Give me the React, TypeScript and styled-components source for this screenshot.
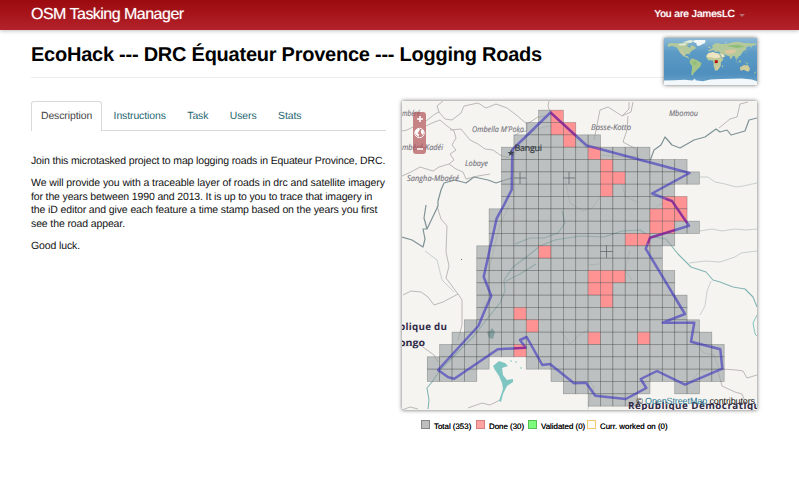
import React from "react";
import styled, { createGlobalStyle } from "styled-components";

const Global = createGlobalStyle`
  * { box-sizing: border-box; }
  html, body { margin: 0; padding: 0; background: #fff; }
  body {
    font-family: "Liberation Sans", Arial, sans-serif;
    font-size: 10.5px;
    line-height: 14px;
    color: #111;
    overflow: hidden;
    text-rendering: geometricPrecision;
  }
`;

const Navbar = styled.header`
  height: 30px;
  padding: 0 54px 0 31px;
  display: flex;
  align-items: center;
  justify-content: space-between;
  background: linear-gradient(#9b0a0d, #b4222b);
  box-shadow: 0 1px 4px rgba(0, 0, 0, 0.25);
  color: #fff;
  white-space: nowrap;
`;

const Brand = styled.span`
  font-size: 16px;
  line-height: 29px;
  height: 30px;
  letter-spacing: -0.52px;
  text-shadow: 0 0 1px rgba(255, 255, 255, 0.5);
`;

const UserMenu = styled.span`
  display: flex;
  align-items: center;
  gap: 4px;
  height: 30px;
  font-size: 10.3px;
  letter-spacing: -0.05px;
  text-shadow: 0 0 1px #fff;
  align-self: flex-start;
`;

const Caret = styled.i`
  border: 3px solid transparent;
  border-top-color: #b96b70;
  border-bottom: 0;
`;

const Page = styled.main`
  width: 726px;
  margin-left: 31px;
`;

const TitleBar = styled.div`
  height: 48px;
  display: flex;
  justify-content: space-between;
  border-bottom: 1px solid #eceeee;
`;

const Title = styled.h1`
  margin: 0;
  padding-top: 13px;
  font-size: 20px;
  line-height: 24px;
  letter-spacing: -0.245px;
  color: #000;
  white-space: nowrap;
`;

const Overview = styled.div`
  width: 93px;
  height: 47px;
  margin-top: 8px;
  box-shadow: 0 0 4px rgba(0, 0, 0, 0.6);
  svg { display: block; }
`;

const Columns = styled.div`
  display: grid;
  grid-template-columns: 355px 355px;
  column-gap: 16px;
  padding-top: 23px;
`;

const Tabs = styled.nav`
  display: flex;
  height: 30px;
  border-bottom: 1px solid #d9d9d9;
  font-size: 10.4px;
  letter-spacing: -0.08px;
`;

const Tab = styled.a<{ $active?: boolean }>`
  height: ${(p) => (p.$active ? "30px" : "29px")};
  padding: 0 ${(p) => (p.$active ? "9px" : "10px")};
  margin-right: 1.5px;
  line-height: ${(p) => (p.$active ? "29px" : "31px")};
  color: ${(p) => (p.$active ? "#444" : "#246570")};
  background: #fff;
  border: ${(p) => (p.$active ? "1px solid #d9d9d9" : "0")};
  border-bottom: 0;
  border-radius: 3px 3px 0 0;
`;

const Prose = styled.div`
  padding-top: 24px;
  white-space: nowrap;
`;

const Paragraph = styled.p`
  margin: 0 0 8px;
  line-height: 13.8px;
`;

const Line = styled.span<{ $spacing?: number }>`
  display: block;
  letter-spacing: ${(p) => p.$spacing ?? -0.12}px;
`;

const MapFrame = styled.div`
  position: relative;
  height: 309px;
  background: #f5f4f0;
  box-shadow: 0 0 4px rgba(0, 0, 0, 0.6);
  svg { display: block; }
`;

const ZoomControl = styled.div`
  position: absolute;
  left: 11px;
  top: 11px;
  width: 13px;
  height: 42px;
  border-radius: 3px;
  background: rgba(177, 82, 88, 0.7);
`;

const Attribution = styled.div`
  position: absolute;
  right: 2px;
  bottom: 2px;
  font-size: 9px;
  line-height: 14px;
  letter-spacing: -0.12px;
  color: #111;
  white-space: nowrap;
  a { color: #2b7a94; }
`;

const Legend = styled.div`
  display: flex;
  padding: 10px 0 0 19px;
  font-size: 7.9px;
  line-height: 12px;
  white-space: nowrap;
`;

const LegendItem = styled.span<{ $width: number }>`
  display: flex;
  gap: 4px;
  width: ${(p) => p.$width}px;
  text-shadow: 0 0 0.5px #111;
`;

const Swatch = styled.i<{ $fill: string; $edge: string }>`
  width: 9px;
  height: 9px;
  flex: none;
  border: 1px solid ${(p) => p.$edge};
  background: ${(p) => p.$fill};
`;

const LegendText = styled.span`
  padding-top: 1px;
`;

const STEP_X = 12.37;
const STEP_Y = 12.33;
const ORIGIN_X = 427.3;
const ORIGIN_Y = 110.2;

// Per grid row: [first column, column after the last] spans, and finished columns.
const rows: { spans: [number, number][]; done?: number[] }[] = [
  { spans: [[9, 11]], done: [10] },
  { spans: [[8, 12]], done: [10, 11] },
  { spans: [[7, 14]], done: [11] },
  { spans: [[6, 18]], done: [13] },
  { spans: [[6, 21]], done: [14] },
  { spans: [[6, 22]], done: [14, 15] },
  { spans: [[6, 20]], done: [14] },
  { spans: [[6, 21]], done: [19, 20] },
  { spans: [[5, 21]], done: [18, 19, 20] },
  { spans: [[5, 22]], done: [18, 19] },
  { spans: [[5, 20]], done: [16, 17] },
  { spans: [[4, 19]], done: [9] },
  { spans: [[4, 19]] },
  { spans: [[4, 20]], done: [13, 14, 15] },
  { spans: [[4, 20]], done: [13, 14] },
  { spans: [[4, 21]], done: [14] },
  { spans: [[4, 21]], done: [7] },
  { spans: [[3, 22]], done: [8] },
  { spans: [[2, 23]], done: [13, 17] },
  { spans: [[1, 24]], done: [7] },
  { spans: [[0, 5], [8, 24]] },
  { spans: [[0, 4], [10, 24]] },
  { spans: [[11, 18], [20, 22]] },
  { spans: [[13, 17]] },
];

const cells = rows.flatMap((row, y) =>
  row.spans.flatMap(([from, to]) =>
    Array.from({ length: to - from }, (_, k) => ({
      x: from + k,
      y,
      done: row.done?.includes(from + k) ?? false,
    }))
  )
);

const boundary =
  "550.5,112.5 586.7,145.5 689.5,173 652,193.5 672,201 689,225.7 650,237.7 645.7,248.7 685,314 662.7,322.7 694.3,322.7 691,341.7 720.3,349.3 722.3,368.7 685,384.7 657,371 640.7,379 646.3,388 625.7,399 595.3,395.7 586,382.7 574,383.3 550,364 542.3,365 526.7,337 520,340 525.7,347.7 497.7,349.3 454.3,378.7 448.3,377.3 438,370 478.3,326 485,310 491.3,296 483.7,276.7 496.7,218.3 504,205 511.7,189.7 512.3,149.7";

const regionBorders = [
  "M402 131 L407 130 L413 127 M426 121 L435 114 L439 112 L437 106 L443 101",
  "M426 126 L432 123 L440 120 L447 126 L454 131 L456 138 L452 145 L456 150 L450 154 L454 160 L449 164 L439 167 L433 171 L420 167 L411 172 L402 176",
  "M439 112 L445 119 L452 120 L461 113 L464 106 L478 103 L486 108 L496 104 L507 108 L515 114 L521 119 L527 124 L527 131 L520 132 L514 136",
  "M450 130 L461 129 L470 140 L478 144 L485 149 L493 150 L500 155 L509 158",
  "M449 164 L456 169 L463 172 L466 179 M466 179 L478 176 L490 174",
  "M527 124 L538 117 L546 116 M549 101 L548 106 L550 112",
  "M594 140 L597 125 L600 110 L608 107 L616 112 L622 116 L629 109 L629 102 M622 116 L631 112 L633 102 M628 116 L627 130 L623 142 L636 149 L638 160 L648 162",
  "M719 128 L730 119 L737 117 L740 104 L748 102",
  "M403 295 L411 291 L421 292 L428 297 L434 305 L443 302 L458 294 L446 278 L449 266 L446 252 L447 226 L441 219 L437 206",
  "M458 294 L462 300 L462 325 L458 340 M402 346 L420 345 L434 355 L438 362",
  "M722 369 L736 370 L743 371 L747 378 L757 375 M718 371 L722 386 L735 392 L742 394 L744 399",
  "M468 408 L482 403 L490 405 L500 400 M402 410 L410 407 L418 409",
];

const rivers = [
  "M402 237 L412 240 L423 247 L425 239 L423 229 L427 229 L424 218 L426 205 M427 229 L438 206 L438 201 L441 190 L444 183 L455 180 L466 183 L474 177 L488 180 L496 183 L505 180 L512 178",
  "M650 161 L654 150 L661 145 L665 137 L672 145 L680 148 L694 140 L705 137 L716 129 L720 132 L727 130 L731 135 L745 131 L749 120 L757 118",
];

const streams = [
  "M428 409 L429 400 L427 388 L432 382 L440 370 L454 356 L474 336 L487 319 L500 303 L505 291 L504 280 L513 267 L529 255 L540 246 L555 240 L580 236 L604 237 L622 231 L640 230 L649 236 L666 239 L678 254 L691 267 L706 272 L713 280 L720 282 L733 287 L745 289 L753 297 L757 307",
  "M506 281 L520 274 L536 264 M515 244 L530 238 L544 238 L558 233 L565 223 L562 211",
];

const creeks = [
  "M700 177 L708 177 L715 182 L725 184 L736 187 L743 186 L757 183",
  "M689 263 L705 261 L720 262 L735 257 L741 253 L757 251 M711 281 L707 291 L705 306 L700 315",
  "M700 231 L712 229 L722 231 L735 229 L746 230 L757 229",
  "M512 159 L517 150 L528 135 L537 129 L549 126 L561 128 L573 134 L585 147 L601 155 L620 157 L640 156",
  "M425 251 L437 260 L442 280 L454 292 M509 205 L500 225 L495 245 L490 265 L488 280 L490 297 L482 309",
  "M565 180 L570 203 L583 211 L592 208 L600 197 M620 175 L625 196 L639 203 M630 250 L625 270 L632 280",
  "M560 330 L570 344 L578 336 L588 330 M589 380 L594 388 L590 396 L588 409 M690 337 L704 353 L714 355 L719 369 L700 371 L690 382",
  "M650 215 L658 205 L666 203 M669 287 L674 297 L682 311 M588 265 L600 264",
];

const labels: [string, number, number, number][] = [
  ["mbéré", 402, 115.5, 18],
  ["mbéré-Kadéi", 402, 149.5, 41],
  ["Ombella M'Poko", 472, 132, 52],
  ["Lobaye", 465, 166, 23],
  ["Sangha-Mbaéré", 407, 181, 52],
  ["Basse-Kotto", 591, 130, 40],
  ["Mbomou", 669, 116, 29],
];

function ProjectMap() {
  return (
    <svg width="355" height="309" viewBox="402 101 355 309" fontFamily="'Open Sans', 'Noto Sans', sans-serif">
      <g fill="none" strokeLinejoin="round">
        {regionBorders.map((d) => <path key={d} d={d} stroke="#bcb8b9" strokeWidth="1" />)}
        {creeks.map((d) => <path key={d} d={d} stroke="#b5c0be" strokeWidth="0.7" />)}
        {rivers.map((d) => <path key={d} d={d} stroke="#7f9296" strokeWidth="1.2" />)}
        {streams.map((d) => <path key={d} d={d} stroke="#83b5b4" strokeWidth="1.1" />)}
        <path d="M757 315 L753 323 L755 334 L758 337" stroke="#83c5bd" />
      </g>
      <g fill="#7fc6c2">
        <path d="M493 366 L499 361 L505 363 L508 366 L502 368 L503 375 L507 380 L513 379 L513 382 L507 386 L503 394 L501 402 L499 401 L503 389 L502 383 L499 376 L495 370 Z" />
        <path d="M487 332 L490 331 L492 328 L495 332 L493 339 L489 338 Z" fill="#5d9c9b" />
        <circle cx="511" cy="361" r="0.8" /><circle cx="516" cy="362" r="0.8" /><circle cx="521" cy="368" r="0.8" />
      </g>
      <g fontSize="8" fontStyle="italic" fill="#777580" stroke="#777580" strokeWidth="0.15">
        {labels.map(([name, x, y, w]) => (
          <text key={name} x={x} y={y} textLength={w} lengthAdjust="spacingAndGlyphs">{name}</text>
        ))}
      </g>
      <g stroke="#2e3436" strokeOpacity="0.36" strokeWidth="0.7">
        {cells.map((c) => (
          <rect
            key={`${c.x}-${c.y}`}
            x={ORIGIN_X + c.x * STEP_X}
            y={ORIGIN_Y + c.y * STEP_Y}
            width={STEP_X}
            height={STEP_Y}
            fill={c.done ? "#ff8a8c" : "#9da3a4"}
            fillOpacity={c.done ? 0.92 : 0.64}
          />
        ))}
      </g>
      <path d="M514 178 H526 M520 172 V184 M563 178 H575 M569 172 V184 M600 251.500 H613 M606.500 245 V258" stroke="#606a6c" strokeWidth="0.8" />
      <polygon points={boundary} fill="none" stroke="#3830c0" strokeOpacity="0.6" strokeWidth="2.5" strokeLinejoin="round" />
      <path d="M550.500 112.500 L576 136 M666 199 L672 201 L687 223 M675 230 L650 237.700 L648 243 M514 348.200 L525.700 347.700" fill="none" stroke="#9c1c88" strokeOpacity="0.7" strokeWidth="2" />
      <path d="M511 149.500 L512 152 L514.500 152 L512.500 153.700 L513.400 156 L511 154.600 L508.700 156 L509.500 153.700 L507.500 152 L510 152 Z" fill="#3b4450" />
      <text x="514.500" y="150.500" fontSize="8.800" fill="#30363e" stroke="#30363e" strokeWidth="0.2" textLength="27.500">Bangui</text>
      <g fontSize="9.800" fontWeight="700" fill="#302a48">
        <text x="399" y="330" textLength="48">blique du</text>
        <text x="399" y="345.500" textLength="26" lengthAdjust="spacingAndGlyphs">ongo</text>
        <text x="628" y="409" textLength="132">République Démocratiqu</text>
      </g>
      <circle cx="461.500" cy="259.500" r="0.6" fill="#667" />
    </svg>
  );
}

function WorldMap() {
  return (
    <svg width="93" height="47" viewBox="-180 -90 360 180" preserveAspectRatio="none">
      <defs>
        <linearGradient id="ocean" x1="0" y1="0" x2="0" y2="1">
          <stop offset="0" stopColor="#8dbad6" />
          <stop offset="0.3" stopColor="#5c9bc6" />
          <stop offset="0.75" stopColor="#4f8fbe" />
          <stop offset="1" stopColor="#6ba4ca" />
        </linearGradient>
      </defs>
      <rect x="-180" y="-90" width="360" height="180" fill="url(#ocean)" />
      <g fill="#b3c99b">
        <path d="M-166 -66 L-156 -71 L-125 -70 L-95 -72 L-82 -68 L-92 -60 L-80 -52 L-76 -62 L-64 -59 L-55 -52 L-66 -45 L-75 -38 L-81 -31 L-80 -25 L-84 -30 L-96 -28 L-97 -20 L-88 -21 L-84 -13 L-78 -8 L-90 -14 L-105 -20 L-117 -33 L-124 -43 L-130 -54 L-150 -60 L-164 -56 Z" />
        <path d="M-78 -8 L-70 -12 L-52 -5 L-35 6 L-40 21 L-48 27 L-58 38 L-66 46 L-68 54 L-75 50 L-72 30 L-71 18 L-81 5 Z" fill="#a4c587" />
        <path d="M-16 -15 L-17 -22 L-9 -32 L10 -37 L20 -31 L33 -31 L43 -12 L51 -11 L40 4 L40 16 L33 27 L26 34 L18 34 L12 17 L12 5 L8 -5 L-8 -5 Z" fill="#c0cc98" />
        <path d="M-9 -37 L-8 -43 L4 -50 L10 -55 L5 -60 L17 -69 L28 -71 L42 -67 L68 -69 L90 -75 L110 -76 L130 -71 L178 -69 L178 -64 L162 -60 L158 -52 L155 -60 L138 -55 L138 -46 L126 -38 L121 -31 L115 -22 L108 -20 L108 -11 L101 -15 L103 -2 L98 -10 L93 -21 L87 -21 L79 -8 L73 -20 L58 -25 L48 -30 L58 -20 L45 -13 L35 -30 L36 -37 L27 -38 L20 -36 L12 -44 L3 -42 Z" />
        <path d="M-52 -60 L-43 -60 L-20 -72 L-20 -82 L-60 -82 L-70 -77 L-55 -70 Z" fill="#f3f7f7" />
        <path d="M114 22 L122 18 L131 12 L137 16 L142 11 L153 27 L149 38 L140 37 L130 32 L116 35 Z" fill="#d1cb99" />
        <path d="M95 -5 L106 6 L103 5 Z M109 -2 L117 -6 L116 4 L110 3 Z M131 1 L150 9 L139 8 Z M44 16 L50 14 L46 25 Z M167 46 L174 39 L178 37 L173 46 Z M130 -32 L140 -36 L142 -43 L138 -37 Z M-10 -52 L-4 -58 L1 -52 Z M-24 -64 L-14 -65 L-16 -67 Z" />
      </g>
      <path d="M-15 -18 L-9 -31 L10 -35 L32 -30 L39 -16 L20 -12 Z M38 -29 L47 -29 L56 -20 L45 -15 Z" fill="#eee4c4" />
      <path d="M-125 -67 L-90 -70 L-100 -61 L-120 -61 Z M-110 -73 L-80 -82 L-65 -80 L-75 -71 Z M55 -71 L63 -76 L60 -71 Z" fill="#e2eddb" />
      <path d="M-119 -48 L-106 -34 L-101 -22 L-110 -30 Z M50 -40 L75 -46 L103 -45 L90 -31 L65 -29 Z M22 20 L31 18 L28 31 L18 32 Z" fill="#dcc7a0" />
      <path d="M60 -60 L110 -64 L135 -56 L100 -52 Z M-71 0 L-53 0 L-55 13 L-66 13 Z M12 -4 L28 -5 L26 7 L14 6 Z" fill="#91bd7b" />
      <path d="M-180 73 L-140 72 L-100 70 L-70 73 L-60 65 L-58 72 L-30 76 L0 69 L40 67 L80 66 L120 65 L160 69 L180 76 V90 H-180 Z" fill="#f2f7f9" />
      <rect x="17" y="-5" width="11" height="11" fill="#c00d16" />
    </svg>
  );
}

function ZoomIcons() {
  return (
    <svg width="13" height="42" viewBox="0 0 13 42">
      <path d="M4 7 H10 M7 4 V10 M4 37 H10" stroke="#fff" strokeWidth="1.5" />
      <circle cx="6.500" cy="21" r="4.700" fill="none" stroke="#fff" strokeWidth="1" />
      <path d="M2.500 18.500 L5 16.500 L7 17.500 L5.500 20 L4.500 21 L6 22.500 L5.500 25 L3.500 23 L2 21 Z M8 18 L10 18 L11 20.500 L9.500 23 L8 21 Z" fill="#fff" />
    </svg>
  );
}

const legend = [
  { text: "Total (353)", fill: "#bebebe", edge: "#858585", width: 55 },
  { text: "Done (30)", fill: "#ffa3a3", edge: "#d57e7e", width: 52 },
  { text: "Validated (0)", fill: "#7cfb7c", edge: "#55bf55", width: 59 },
  { text: "Curr. worked on (0)", fill: "#fffcf3", edge: "#f5c674", width: 90 },
];

export default function App() {
  return (
    <>
      <Global />
      <Navbar>
        <Brand>OSM Tasking Manager</Brand>
        <UserMenu>You are JamesLC <Caret /></UserMenu>
      </Navbar>
      <Page>
        <TitleBar>
          <Title>EcoHack --- DRC Équateur Provence --- Logging Roads</Title>
          <Overview><WorldMap /></Overview>
        </TitleBar>
        <Columns>
          <section>
            <Tabs>
              <Tab $active>Description</Tab>
              <Tab>Instructions</Tab>
              <Tab>Task</Tab>
              <Tab>Users</Tab>
              <Tab>Stats</Tab>
            </Tabs>
            <Prose>
              <Paragraph>
                <Line $spacing={-0.145}>Join this microtasked project to map logging roads in Equateur Province, DRC.</Line>
              </Paragraph>
              <Paragraph>
                <Line $spacing={-0.09}>We will provide you with a traceable layer of roads in drc and satellite imagery</Line>
                <Line $spacing={-0.14}>for the years between 1990 and 2013. It is up to you to trace that imagery in</Line>
                <Line>the iD editor and give each feature a time stamp based on the years you first</Line>
                <Line>see the road appear.</Line>
              </Paragraph>
              <Paragraph>
                <Line>Good luck.</Line>
              </Paragraph>
            </Prose>
          </section>
          <section>
            <MapFrame>
              <ProjectMap />
              <ZoomControl><ZoomIcons /></ZoomControl>
              <Attribution>© <a>OpenStreetMap</a> contributors</Attribution>
            </MapFrame>
            <Legend>
              {legend.map((item) => (
                <LegendItem key={item.text} $width={item.width}>
                  <Swatch $fill={item.fill} $edge={item.edge} />
                  <LegendText>{item.text}</LegendText>
                </LegendItem>
              ))}
            </Legend>
          </section>
        </Columns>
      </Page>
    </>
  );
}
